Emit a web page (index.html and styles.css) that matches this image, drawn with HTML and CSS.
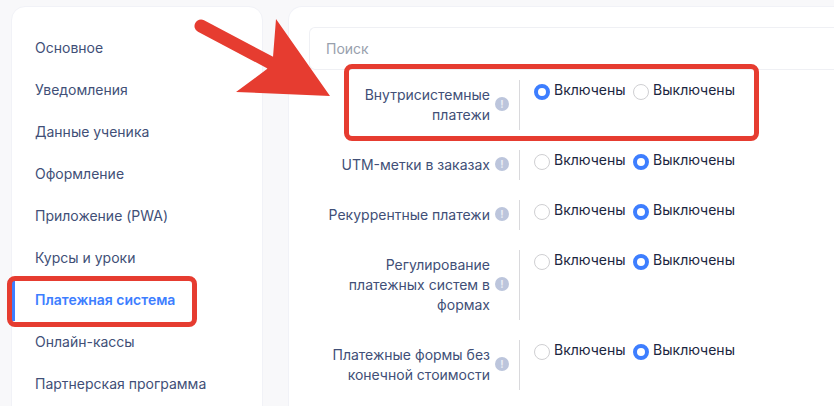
FILE: index.html
```html
<!DOCTYPE html>
<html lang="ru">
<head>
<meta charset="utf-8">
<title>Настройки</title>
<link rel="stylesheet" href="styles.css">
</head>
<body>
<div class="page">
  <nav class="side">
    <a class="item">Основное</a>
    <a class="item">Уведомления</a>
    <a class="item">Данные ученика</a>
    <a class="item">Оформление</a>
    <a class="item">Приложение (PWA)</a>
    <a class="item">Курсы и уроки</a>
    <a class="item active">Платежная система</a>
    <a class="item">Онлайн-кассы</a>
    <a class="item">Партнерская программа</a>
  </nav>
  <main class="main">
    <div class="search">Поиск</div>
    <div class="rows">
      <div class="row">
        <div class="label"><span class="label-text">Внутрисистемные платежи</span><span class="info">!</span></div>
        <div class="ctl h50">
          <span class="radio on"></span><span class="opt">Включены</span>
          <span class="radio"></span><span class="opt">Выключены</span>
        </div>
      </div>
      <div class="row">
        <div class="label"><span class="label-text">UTM-метки в заказах</span><span class="info">!</span></div>
        <div class="ctl h30">
          <span class="radio"></span><span class="opt">Включены</span>
          <span class="radio on"></span><span class="opt">Выключены</span>
        </div>
      </div>
      <div class="row">
        <div class="label"><span class="label-text">Рекуррентные платежи</span><span class="info">!</span></div>
        <div class="ctl h30">
          <span class="radio"></span><span class="opt">Включены</span>
          <span class="radio on"></span><span class="opt">Выключены</span>
        </div>
      </div>
      <div class="row">
        <div class="label"><span class="label-text">Регулирование платежных систем в формах</span><span class="info">!</span></div>
        <div class="ctl h70">
          <span class="radio"></span><span class="opt">Включены</span>
          <span class="radio on"></span><span class="opt">Выключены</span>
        </div>
      </div>
      <div class="row">
        <div class="label"><span class="label-text">Платежные формы без конечной стоимости</span><span class="info">!</span></div>
        <div class="ctl h50">
          <span class="radio"></span><span class="opt">Включены</span>
          <span class="radio on"></span><span class="opt">Выключены</span>
        </div>
      </div>
    </div>
  </main>
</div>
<div class="mark mark-rows"></div>
<div class="mark mark-menu"></div>
<svg class="arrow" width="340" height="110" viewBox="0 0 340 110" aria-hidden="true">
  <path d="M201 26 L271 63" stroke="#e63c30" stroke-width="13" stroke-linecap="round" fill="none"/>
  <path d="M276 19 L330 96 L236 92 L267 69 L273 57 Z" fill="#e63c30"/>
</svg>
</body>
</html>
```
FILE: styles.css
```css
* { box-sizing: border-box; }
html, body { margin: 0; height: 100%; overflow: hidden; }
body {
  background: #f8f8fa;
  font-family: Inter, "Liberation Sans", sans-serif;
  font-size: 14px;
  line-height: 20px;
  position: relative;
}
.page {
  display: flex;
  gap: 25px;
  padding: 6px 0 0 11px;
  height: 406px;
  overflow: hidden;
}
.side {
  flex: 0 0 252px;
  height: 420px;
  background: #fff;
  border: 1px solid #f1f2f7;
  border-radius: 14px;
  padding: 20px 0 0;
  display: flex;
  flex-direction: column;
}
.item {
  display: block;
  flex: 0 0 42px;
  line-height: 42px;
  padding-left: 23px;
  color: #414f77;
  white-space: nowrap;
}
.item.active {
  color: #3d7eff;
  font-weight: 600;
  border-left: 3px solid #3d7eff;
  padding-left: 20px;
  width: 175px;
}
.main {
  flex: 1;
  height: 420px;
  background: #fff;
  border: 1px solid #f1f2f7;
  border-right: 0;
  border-radius: 14px 0 0 14px;
  padding: 20px 0 0 20px;
}
.search {
  height: 43px;
  border: 1px solid #eff0f4;
  border-right: 0;
  border-radius: 6px 0 0 6px;
  padding-left: 16px;
  line-height: 41px;
  color: #98a0ad;
}
.rows {
  display: flex;
  flex-direction: column;
  gap: 20px;
  padding-top: 10px;
}
.row { display: flex; align-items: stretch; }
.label {
  flex: 0 0 210px;
  display: flex;
  align-items: center;
  justify-content: flex-end;
  gap: 5px;
  color: #414f77;
  text-align: right;
  padding-right: 10px;
}
.label-text { display: block; width: 166px; flex: 0 0 auto; }
.row:nth-child(2) .label-text,
.row:nth-child(3) .label-text { width: auto; white-space: nowrap; }
.row:nth-child(5) .label-text { width: 170px; }
.info {
  flex: 0 0 14px;
  width: 14px;
  height: 14px;
  margin-bottom: 2px;
  border-radius: 50%;
  background: #bcc5dc;
  color: #e9ecf4;
  font-size: 10px;
  font-weight: 700;
  line-height: 14px;
  text-align: center;
}
.ctl {
  flex: 1;
  display: flex;
  align-items: flex-start;
  border-left: 1px solid #d9d9dc;
  padding-left: 14px;
  color: #1b2640;
}
.h30 { height: 30px; }
.h50 { height: 50px; }
.h70 { height: 70px; }
.radio {
  flex: 0 0 16px;
  width: 16px;
  height: 16px;
  margin-top: 4px;
  border: 1px solid #cfcfd2;
  border-radius: 50%;
  background: #fff;
}
.radio.on { border: 4.5px solid #3d7eff; }
.opt { margin: 0 7.5px 0 4px; height: 20px; }
.mark {
  position: absolute;
  border: 5px solid #e63c30;
  border-radius: 8px;
  pointer-events: none;
}
.mark-rows { left: 344px; top: 64px; width: 415px; height: 77px; }
.mark-menu { left: 7px; top: 276px; width: 190px; height: 51px; }
.arrow { position: absolute; left: 0; top: 0; pointer-events: none; }
```
